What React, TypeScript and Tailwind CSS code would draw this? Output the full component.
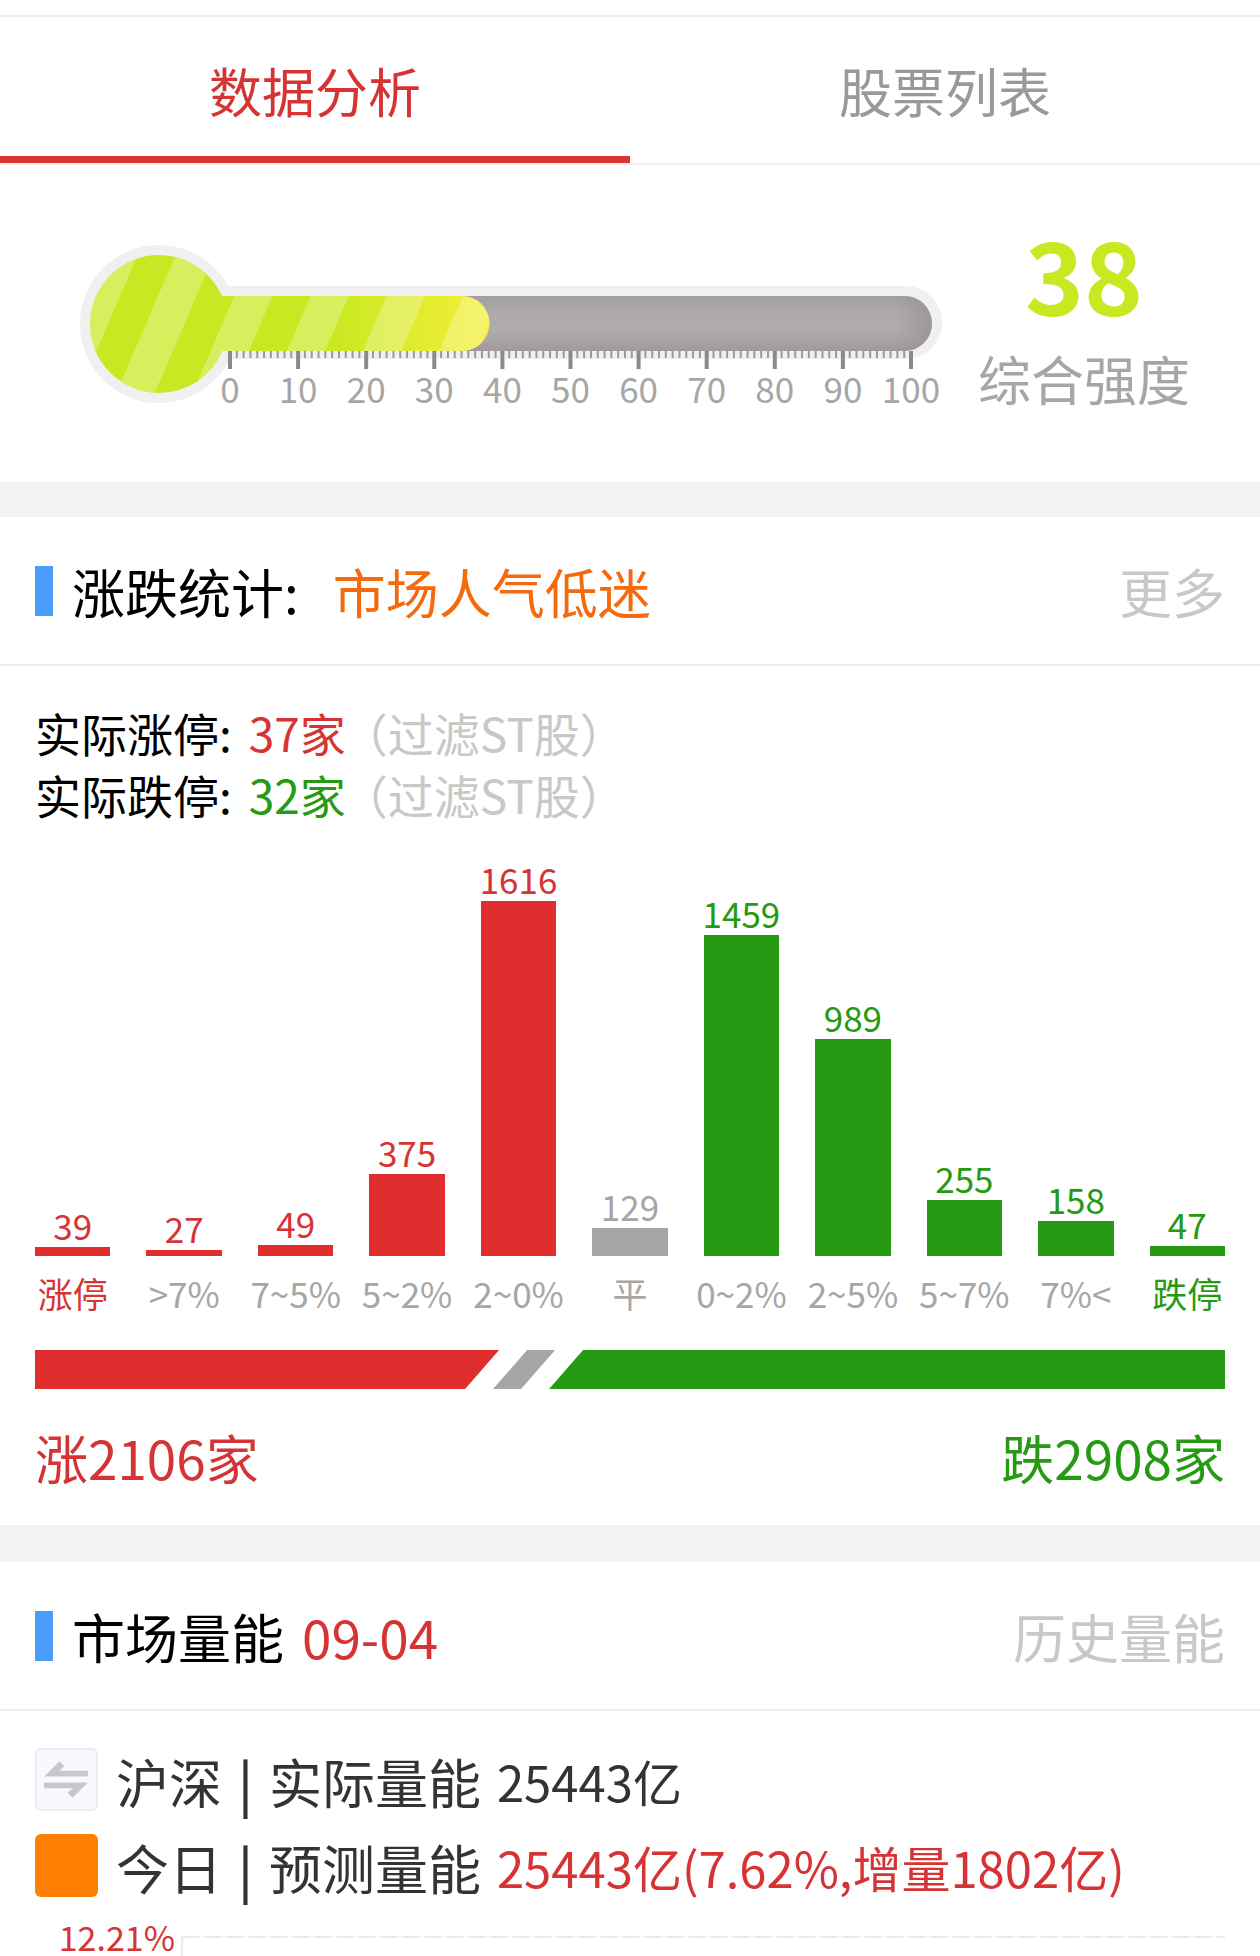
import React from "react";

type Tone = "up" | "flat" | "down";

const textTone: Record<Tone, string> = {
  up: "text-[#d63434]",
  flat: "text-[#a6a6a6]",
  down: "text-[#259a12]",
};

const barTone: Record<Tone, string> = {
  up: "bg-[#e02e2e]",
  flat: "bg-[#a6a6a6]",
  down: "bg-[#259a12]",
};

const distribution: { label: string; value: number; tone: Tone; named?: boolean }[] = [
  { label: "涨停", value: 39, tone: "up", named: true },
  { label: ">7%", value: 27, tone: "up" },
  { label: "7~5%", value: 49, tone: "up" },
  { label: "5~2%", value: 375, tone: "up" },
  { label: "2~0%", value: 1616, tone: "up" },
  { label: "平", value: 129, tone: "flat" },
  { label: "0~2%", value: 1459, tone: "down" },
  { label: "2~5%", value: 989, tone: "down" },
  { label: "5~7%", value: 255, tone: "down" },
  { label: "7%<", value: 158, tone: "down" },
  { label: "跌停", value: 47, tone: "down", named: true },
];

const MAX_BAR = 355;
const MAX_VALUE = 1616;

function Thermometer() {
  const ticks = Array.from({ length: 101 }, (_, i) => i);
  const stripes = [-1, 0, 1, 2, 3, 4];
  return (
    <svg viewBox="80 244 862 176" className="h-auto min-w-0 flex-1 overflow-visible" role="img" aria-label="综合强度 38">
      <defs>
        <linearGradient id="tube" x1="0" y1="0" x2="0" y2="1">
          <stop offset="0" stopColor="#a29e9f" />
          <stop offset="0.35" stopColor="#afabab" />
          <stop offset="0.65" stopColor="#afabab" />
          <stop offset="1" stopColor="#a09a9b" />
        </linearGradient>
        <linearGradient id="tubeEnd" gradientUnits="userSpaceOnUse" x1="895" y1="0" x2="932" y2="0">
          <stop offset="0" stopColor="#958e90" stopOpacity="0" />
          <stop offset="1" stopColor="#958e90" stopOpacity="0.7" />
        </linearGradient>
        <linearGradient id="liquid" gradientUnits="userSpaceOnUse" x1="330" y1="0" x2="489" y2="0">
          <stop offset="0" stopColor="#c8e922" />
          <stop offset="1" stopColor="#f4ee38" />
        </linearGradient>
        <clipPath id="liquidShape">
          <circle cx="159" cy="324" r="69" />
          <path d="M159 296H462a27 27 0 0 1 0 55H159Z" />
        </clipPath>
      </defs>
      <g fill="#f0f0f0">
        <circle cx="159" cy="324" r="79" />
        <rect x="159" y="286" width="783" height="73" rx="36" />
      </g>
      <path d="M159 296H904.500a27.500 27.500 0 0 1 0 55H159Z" fill="url(#tube)" />
      <path d="M880 296H904.500a27.500 27.500 0 0 1 0 55H880Z" fill="url(#tubeEnd)" />
      <g clipPath="url(#liquidShape)">
        <rect x="85" y="250" width="405" height="150" fill="url(#liquid)" />
        {stripes.map((k) => {
          const x = 157.7 + 76.2 * k;
          return (
            <polygon
              key={k}
              points={`${x + 18.4},254 ${x + 56.7},254 ${x - 3.4},394 ${x - 41.7},394`}
              fill="#fff"
              opacity="0.27"
            />
          );
        })}
      </g>
      {ticks.map((t) => {
        const major = t % 10 === 0;
        const x = 230 + t * 6.81;
        return (
          <rect
            key={t}
            x={major ? x - 2 : x - 1}
            y="351"
            width={major ? 4 : 2}
            height={major ? 18 : 7}
            fill={major ? "#8f8889" : "#9d9798"}
          />
        );
      })}
      {ticks
        .filter((t) => t % 10 === 0)
        .map((t) => (
          <text key={t} x={230 + t * 6.81} y="403" textAnchor="middle" fontSize="35" fill="#a6a6a6">
            {t}
          </text>
        ))}
    </svg>
  );
}

function SectionHeader({ children, action }: { children: React.ReactNode; action: string }) {
  return (
    <header className="flex min-h-[149px] items-center border-b-2 border-[#eeeeee] px-[35px] text-[53px] leading-[60px]">
      <span className="mr-[19px] h-[50px] w-[18px] bg-[#4b9dfb]" />
      {children}
      <a href="#" className="ml-auto text-[#c8c8c8]">
        {action}
      </a>
    </header>
  );
}

function LimitLine({ label, count, tone }: { label: string; count: string; tone: Tone }) {
  return (
    <p className="flex">
      <span className="mr-[17px]">{label}</span>
      <span className={textTone[tone]}>{count}</span>
      <span className="-ml-1 text-[#c8c8c8]">（过滤ST股）</span>
    </p>
  );
}

function VolumeRow({
  icon,
  scope,
  label,
  value,
  valueClass,
}: {
  icon: React.ReactNode;
  scope: string;
  label: string;
  value: string;
  valueClass: string;
}) {
  return (
    <div className="flex items-center gap-[18px] text-[53px] leading-[60px] whitespace-nowrap text-[#333333]">
      {icon}
      <div className="flex items-center gap-4 pt-1">
        <span>{scope}</span>
        <span className="font-medium">|</span>
        <span>{label}</span>
        <span className={valueClass}>{value}</span>
      </div>
    </div>
  );
}

export default function App() {
  return (
    <main className="bg-white pt-[15px] font-['Noto_Sans_CJK_SC',sans-serif] text-black">
      <nav className="flex border-y-2 border-[#eeeeee] text-[53px] leading-[60px]">
        <button
          type="button"
          className="flex-1 border-b-[7px] border-[#dd3535] pt-[43px] pb-[36px] text-[#d63434]"
        >
          数据分析
        </button>
        <button type="button" className="flex-1 pt-[43px] pb-[43px] text-[#999999]">
          股票列表
        </button>
      </nav>

      <section className="flex items-start gap-9 border-b-[35px] border-[#f2f2f2] pt-[79px] pr-[70px] pb-[62px] pl-20">
        <Thermometer />
        <div className="-mt-5 text-center">
          <div className="text-[100px] leading-[98px] font-bold text-[#c8e922]">38</div>
          <div className="mt-[26px] text-[53px] leading-[60px] text-[#a6a6a6]">综合强度</div>
        </div>
      </section>

      <section className="border-b-[37px] border-[#f2f2f2]">
        <SectionHeader action="更多">
          <h2>涨跌统计:</h2>
          <span className="ml-[34px] text-[#f56a0c]">市场人气低迷</span>
        </SectionHeader>
        <div className="px-[35px] pt-[35px] pb-[38px]">
          <div className="text-[46px] leading-[62px]">
            <LimitLine label="实际涨停:" count="37家" tone="up" />
            <LimitLine label="实际跌停:" count="32家" tone="down" />
          </div>

          <div className="mt-[34px] grid grid-cols-11 items-end gap-9 text-[35px] leading-10">
            {distribution.map((d) => (
              <div key={d.label} className="flex min-w-0 flex-col items-center whitespace-nowrap">
                <span className={`mb-0.5 ${textTone[d.tone]}`}>{d.value}</span>
                <div
                  className={`w-full ${barTone[d.tone]}`}
                  style={{ height: Math.round((d.value / MAX_VALUE) * MAX_BAR) }}
                />
                <span className={`mt-[17px] ${d.named ? textTone[d.tone] : textTone.flat}`}>{d.label}</span>
              </div>
            ))}
          </div>

          <div className="mt-[37px] flex h-[39px]">
            <div className="w-[39%] bg-[#e02e2e] [clip-path:polygon(0_0,100%_0,calc(100%-34px)_100%,0_100%)]" />
            <div className="-ml-1.5 w-[62px] bg-[#a6a6a6] [clip-path:polygon(34px_0,100%_0,28px_100%,0_100%)]" />
            <div className="-ml-1.5 flex-1 bg-[#259a12] [clip-path:polygon(34px_0,100%_0,100%_100%,0_100%)]" />
          </div>

          <div className="mt-[38px] flex justify-between text-[53px] leading-[60px]">
            <span className="text-[#d63434]">涨2106家</span>
            <span className="text-[#259a12]">跌2908家</span>
          </div>
        </div>
      </section>

      <section>
        <SectionHeader action="历史量能">
          <h2>市场量能</h2>
          <span className="ml-[18px] text-[#d63434]">09-04</span>
        </SectionHeader>
        <div className="flex flex-col gap-[22px] px-[35px] pt-9">
          <VolumeRow
            icon={
              <button
                type="button"
                aria-label="切换"
                className="size-[63px] shrink-0 rounded-md border-2 border-[#ebebf0] bg-[#f8f8fe]"
              >
                <svg viewBox="0 0 58 58" className="size-full" fill="#c8c8cc">
                  <path d="M7 26 22 11 27 16 22 20.500H50V26Z" />
                  <path d="M50 32 35 47 30 42 35 37.500H7V32Z" />
                </svg>
              </button>
            }
            scope="沪深"
            label="实际量能"
            value="25443亿"
            valueClass="text-[49px]"
          />
          <VolumeRow
            icon={<span className="size-[63px] shrink-0 rounded-md bg-[#ff7f00]" />}
            scope="今日"
            label="预测量能"
            value="25443亿(7.62%,增量1802亿)"
            valueClass="text-[49px] text-[#d63434]"
          />
        </div>
        <div className="mt-5 flex px-[35px]">
          <span className="w-[146px] pr-1.5 text-right text-[34px] leading-10 text-[#d63434]">12.21%</span>
          <div className="mt-[19px] flex-1 border-l-2 border-[#eaeaea]">
            <div className="h-0.5 bg-[repeating-linear-gradient(90deg,#eaeaea_0_16px,#f8f8f8_16px_22px)]" />
          </div>
        </div>
      </section>
    </main>
  );
}
